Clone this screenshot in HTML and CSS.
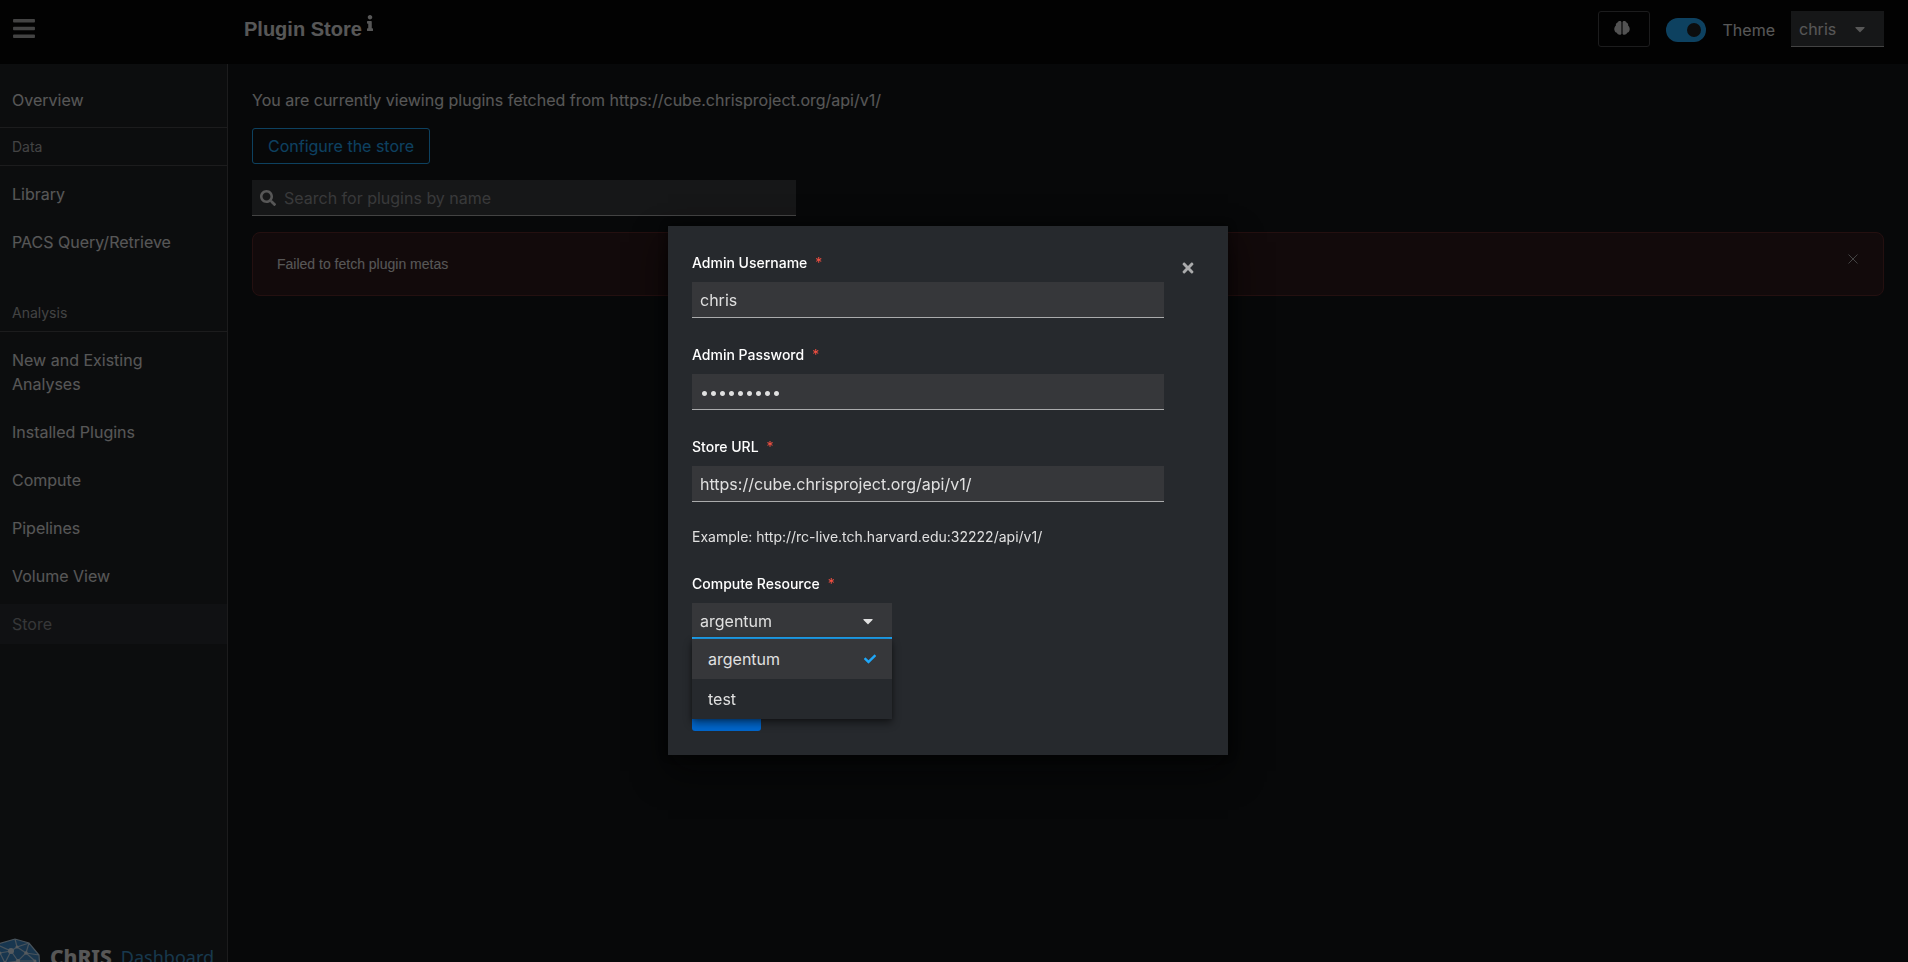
FILE: index.html
```html
<!DOCTYPE html>
<html lang="en">
<head>
<meta charset="utf-8">
<title>Plugin Store</title>
<link rel="stylesheet" href="styles.css">
</head>
<body>
<div class="page">
  <header class="masthead">
    <div class="masthead-start">
      <button class="plain menu-toggle" type="button" aria-label="Global navigation">
        <svg class="icon-bars" viewBox="0 0 448 512" fill="currentColor"><path d="M16 132h416c8.837 0 16-7.163 16-16V76c0-8.837-7.163-16-16-16H16C7.163 60 0 67.163 0 76v40c0 8.837 7.163 16 16 16zm0 160h416c8.837 0 16-7.163 16-16v-40c0-8.837-7.163-16-16-16H16c-8.837 0-16 7.163-16 16v40c0 8.837 7.163 16 16 16zm0 160h416c8.837 0 16-7.163 16-16v-40c0-8.837-7.163-16-16-16H16c-8.837 0-16 7.163-16 16v40c0 8.837 7.163 16 16 16z"/></svg>
      </button>
    </div>
    <h1 class="title">Plugin Store
      <svg class="icon-info" viewBox="0 0 192 512" fill="currentColor"><path d="M20 424.229h20V279.771H20c-11.046 0-20-8.954-20-20V212c0-11.046 8.954-20 20-20h112c11.046 0 20 8.954 20 20v212.229h20c11.046 0 20 8.954 20 20V492c0 11.046-8.954 20-20 20H20c-11.046 0-20-8.954-20-20v-47.771c0-11.046 8.954-20 20-20zM96 0C56.235 0 24 32.235 24 72s32.235 72 72 72 72-32.235 72-72S135.764 0 96 0z"/></svg>
    </h1>
    <div class="tools">
      <button class="brain-button" type="button" aria-label="Analyses drawer">
        <svg class="icon-brain" viewBox="0 0 16 16">
          <path fill="#d2d2d2" d="M7.200 1.400C6 .5 4 .9 3.600 2.400 2.200 2.800 1.600 4.300 1.900 5.400.5 6.400 0 8.600.4 10 .6 11.600 1.800 12.600 2.800 12.800 3.400 14.600 6 15.400 7.200 14.200z"/>
          <path fill="#d2d2d2" d="M8.800 1.400C10 .5 12 .9 12.400 2.400 13.800 2.800 14.400 4.300 14.100 5.400 15.500 6.400 16 8.600 15.600 10 15.400 11.600 14.200 12.600 13.200 12.800 12.600 14.600 10 15.400 8.800 14.200z"/>
          <path fill="#666" d="M7.200 2h1.600v12H7.200z"/>
        </svg>
      </button>
      <label class="theme"><input class="switch" type="checkbox" role="switch" checked>Theme</label>
      <div class="select user-select">
        <select aria-label="User menu"><option>chris</option></select>
        <svg class="icon-caret" viewBox="0 0 320 512" fill="currentColor"><path d="M31.300 192h257.300c17.800 0 26.700 21.500 14.100 34.100L174.100 354.800c-7.800 7.800-20.500 7.800-28.300 0L17.200 226.100C4.600 213.500 13.500 192 31.300 192z"/></svg>
      </div>
    </div>
  </header>

  <nav class="sidebar" aria-label="Global">
    <a class="nav-link" href="#">Overview</a>
    <h2 class="nav-title nav-title-ruled">Data</h2>
    <a class="nav-link" href="#">Library</a>
    <a class="nav-link" href="#">PACS Query/Retrieve</a>
    <h2 class="nav-title">Analysis</h2>
    <a class="nav-link" href="#">New and Existing Analyses</a>
    <a class="nav-link" href="#">Installed Plugins</a>
    <a class="nav-link" href="#">Compute</a>
    <a class="nav-link" href="#">Pipelines</a>
    <a class="nav-link" href="#">Volume View</a>
    <a class="nav-link current" href="#" aria-current="page">Store</a>
    <div class="brand">
      <svg class="globe" viewBox="0 0 52 52">
        <defs><linearGradient id="g" x1="0" y1="0" x2="1" y2="1"><stop offset="0" stop-color="#3488cf"/><stop offset="1" stop-color="#4a8cc0"/></linearGradient></defs>
        <path fill="url(#g)" d="M27 1 41 5 51 17 52 32 44 45 29 51 13 48 2 37 0 22 10 6z"/>
        <g stroke="#b8d4ea" stroke-width="1.200" fill="none">
          <path d="M10 6 27 1 41 5 51 17 52 32M12 8 23 13 29 9 41 5M29 9 27 1M29 9 38 15 51 17M23 13 12 15 2 19M23 13 17 25 30 23 38 15 41 5M23 13 30 23M38 15 47 23 52 32M30 23 47 23M12 15 17 25"/>
        </g>
        <g fill="#dceaf5"><circle cx="23" cy="13" r="3"/><circle cx="29" cy="9" r="1.500"/><circle cx="38" cy="15" r="1.800"/><circle cx="12" cy="15" r="1.500"/><circle cx="17" cy="25" r="1.800"/><circle cx="30" cy="23" r="2"/><circle cx="47" cy="23" r="1.500"/></g>
      </svg>
      <span class="brand-name">ChRIS</span>
      <span class="brand-sub">Dashboard</span>
    </div>
  </nav>

  <main class="main">
    <p class="source">You are currently viewing plugins fetched from https://cube.chrisproject.org/api/v1/</p>
    <button class="outline-button" type="button">Configure the store</button>
    <div class="search">
      <svg class="icon-search" viewBox="0 0 512 512" fill="currentColor"><path d="M505 442.700L405.300 343c-4.500-4.500-10.600-7-17-7H372c27.600-35.300 44-79.700 44-128C416 93.100 322.900 0 208 0S0 93.100 0 208s93.100 208 208 208c48.300 0 92.700-16.400 128-44v16.300c0 6.400 2.500 12.500 7 17l99.700 99.700c9.400 9.400 24.600 9.400 33.900 0l28.300-28.300c9.400-9.400 9.400-24.600.1-34zM208 336c-70.700 0-128-57.200-128-128 0-70.700 57.200-128 128-128 70.700 0 128 57.200 128 128 0 70.700-57.200 128-128 128z"/></svg>
      <input type="text" placeholder="Search for plugins by name" aria-label="Search for plugins by name">
    </div>
    <div class="alert" role="alert">
      <span class="alert-text">Failed to fetch plugin metas</span>
      <button class="plain alert-close" type="button" aria-label="Dismiss">
        <svg class="icon-thin-x" viewBox="0 0 12 12" fill="none" stroke="currentColor"><path d="M1.500 1.500 10.500 10.500M10.500 1.500 1.500 10.500"/></svg>
      </button>
    </div>
  </main>
</div>

<div class="backdrop">
  <div class="modal" role="dialog" aria-modal="true" aria-label="Configure the store">
    <form class="form">
      <div class="group">
        <label for="user">Admin Username<span class="star">*</span></label>
        <input class="field" id="user" type="text" value="chris">
      </div>
      <div class="group">
        <label for="pass">Admin Password<span class="star">*</span></label>
        <input class="field" id="pass" type="password" value="chris1234">
      </div>
      <div class="group">
        <label for="url">Store URL<span class="star">*</span></label>
        <input class="field" id="url" type="text" value="https://cube.chrisproject.org/api/v1/">
      </div>
      <p class="hint">Example: http://rc-live.tch.harvard.edu:32222/api/v1/</p>
      <div class="group">
        <label for="compute">Compute Resource<span class="star">*</span></label>
        <div class="select compute-select">
          <select id="compute"><option>argentum</option><option>test</option></select>
          <svg class="icon-caret" viewBox="0 0 320 512" fill="currentColor"><path d="M31.300 192h257.300c17.800 0 26.700 21.500 14.100 34.100L174.100 354.800c-7.800 7.800-20.500 7.800-28.300 0L17.200 226.100C4.600 213.500 13.500 192 31.300 192z"/></svg>
          <ul class="menu" role="listbox" aria-label="Compute Resource">
            <li class="menu-item selected" role="option" aria-selected="true">argentum
              <svg class="icon-check" viewBox="0 0 512 512" fill="currentColor"><path d="M173.898 439.404l-166.400-166.400c-9.997-9.997-9.997-26.206 0-36.204l36.203-36.204c9.997-9.998 26.207-9.998 36.204 0L192 312.690 432.095 72.596c9.997-9.997 26.207-9.997 36.204 0l36.203 36.204c9.997 9.997 9.997 26.206 0 36.204l-294.400 294.401c-9.998 9.997-26.207 9.997-36.204-.001z"/></svg>
            </li>
            <li class="menu-item" role="option" aria-selected="false">test</li>
          </ul>
        </div>
      </div>
      <button class="primary" type="button" aria-label="Save"></button>
    </form>
    <button class="plain modal-close" type="button" aria-label="Close">
      <svg class="icon-x" viewBox="0 0 352 512" fill="currentColor"><path d="M242.720 256l100.070-100.070c12.280-12.280 12.280-32.190 0-44.480l-22.240-22.240c-12.280-12.280-32.190-12.280-44.480 0L176 189.280 75.930 89.210c-12.280-12.280-32.190-12.280-44.480 0L9.210 111.450c-12.280 12.280-12.280 32.190 0 44.480L109.280 256 9.210 356.070c-12.280 12.280-12.280 32.190 0 44.480l22.240 22.240c12.280 12.280 32.200 12.280 44.480 0L176 322.720l100.070 100.070c12.280 12.280 32.200 12.280 44.480 0l22.240-22.240c12.280-12.280 12.280-32.190 0-44.480L242.720 256z"/></svg>
    </button>
  </div>
</div>
</body>
</html>
```

FILE: styles.css
```css
* {
  box-sizing: border-box;
}

body {
  margin: 0;
  background: #0f1214;
  color: #e0e0e0;
  font: 16px/24px Inter, "Liberation Sans", sans-serif;
}

h1, h2, p, ul {
  margin: 0;
  padding: 0;
  font-weight: 400;
}

button, input, select {
  margin: 0;
  font: inherit;
  color: inherit;
}

svg {
  display: block;
  flex: none;
}

.page {
  display: grid;
  grid-template: 64px 1fr / 228px 1fr;
  height: 100vh;
  overflow: hidden;
}

.plain {
  display: flex;
  padding: 0;
  border: 0;
  background: none;
}

/* Header */
.masthead {
  grid-column: 1 / -1;
  display: flex;
  align-items: flex-start;
  padding: 11px 24px 0 0;
  background: #000;
}

.masthead-start {
  flex: none;
  width: 244px;
  padding-left: 13px;
}

.menu-toggle {
  padding-top: 5px;
  color: #aaabac;
}

.icon-bars {
  width: 22px;
  height: 25px;
}

.title {
  display: flex;
  gap: 5px;
  font: 700 20px/36px "Liberation Sans", Arial, sans-serif;
}

.icon-info {
  width: 6px;
  height: 16px;
  margin-top: 4px;
}

.tools {
  display: flex;
  align-items: center;
  gap: 16px;
  margin-left: auto;
}

.brain-button {
  width: 52px;
  height: 36px;
  padding: 0 15px 2px;
  border: 1px solid #444548;
  border-radius: 3px;
  background: none;
}

.icon-brain {
  width: 16px;
  height: 16px;
}

.theme {
  display: flex;
  align-items: center;
  gap: 17px;
  padding-top: 1px;
}

.switch {
  appearance: none;
  display: flex;
  align-items: center;
  justify-content: flex-end;
  width: 40px;
  height: 24px;
  padding-right: 5px;
  border-radius: 12px;
  background: #1fa7f8;
}

.switch::before {
  content: "";
  width: 14px;
  height: 14px;
  border-radius: 50%;
  background: #1b1d21;
}

.select {
  position: relative;
  height: 36px;
}

.select select {
  appearance: none;
  display: block;
  width: 100%;
  height: 36px;
  padding: 1px 8px 0;
  border: 0;
  border-bottom: 1px solid #aaabac;
  border-radius: 0;
  outline: 0;
  background: #36373a;
}

.icon-caret {
  position: absolute;
  top: 10px;
  right: 19px;
  width: 10px;
  height: 16px;
}

.user-select {
  width: 93px;
}

/* Sidebar */
.sidebar {
  position: relative;
  display: flex;
  flex-direction: column;
  gap: 8px;
  padding-top: 16px;
  border-right: 1px solid #444548;
  background: #1b1d21;
  overflow: hidden;
}

.nav-link {
  padding: 8px 48px 8px 12px;
  color: #e0e0e0;
  text-decoration: none;
}

.nav-link.current {
  background: #26292d;
  color: #8a8d90;
}

.nav-title {
  margin-top: 24px;
  padding: 8px 12px;
  border-bottom: 1px solid #444548;
  color: #aaabac;
  font-size: 14px;
  line-height: 21px;
}

.nav-title-ruled {
  margin-top: -1px;
  border-top: 1px solid #444548;
}

.brand {
  position: absolute;
  top: 874px;
  left: -12px;
  display: flex;
  white-space: nowrap;
}

.globe {
  width: 52px;
  height: 52px;
}

.brand-name {
  margin: 5px 9px 0 10px;
  color: #e0e0e0;
  font: 800 21px/28px "Noto Sans", sans-serif;
}

.brand-sub {
  margin-top: 5px;
  color: #3a8fc4;
  font: 400 18px/28px "Noto Sans", sans-serif;
}

/* Content */
.main {
  display: flex;
  flex-direction: column;
  align-items: flex-start;
  gap: 16px;
  padding: 24px;
}

.outline-button {
  height: 36px;
  padding: 0 15px;
  border: 1px solid #1fa7f8;
  border-radius: 3px;
  background: none;
  color: #1fa7f8;
}

.search {
  display: flex;
  align-items: center;
  gap: 8px;
  width: 33.333%;
  height: 36px;
  padding: 0 8px;
  border-bottom: 1px solid #aaabac;
  background: #36373a;
}

.search input {
  flex: 1;
  min-width: 0;
  padding: 0;
  border: 0;
  outline: 0;
  background: none;
}

.search input::placeholder {
  color: #8f9194;
  opacity: 1;
}

.icon-search {
  width: 16px;
  height: 16px;
}

.alert {
  display: flex;
  justify-content: space-between;
  width: 100%;
  padding: 20px 24px;
  border: 1px solid #5b2526;
  border-radius: 8px;
  background: #2c1618;
  font: 14px/22px "Liberation Sans", Arial, sans-serif;
}

.alert-close {
  color: #aaabac;
}

.icon-thin-x {
  width: 12px;
  height: 12px;
}

/* Dialog */
.backdrop {
  position: fixed;
  inset: 0;
  display: flex;
  align-items: center;
  justify-content: center;
  padding: 19px 12px 0 0;
  background: rgba(3, 3, 3, 0.62);
}

.modal {
  display: flex;
  align-items: flex-start;
  width: 560px;
  padding: 24px;
  background: #26292d;
  box-shadow: 0 16px 32px rgba(3, 3, 3, 0.64), 0 0 8px rgba(3, 3, 3, 0.4);
}

.form {
  flex: 1;
  display: flex;
  flex-direction: column;
  gap: 24px;
}

.group {
  display: flex;
  flex-direction: column;
  gap: 6px;
}

.group label {
  color: #fff;
  font-size: 14px;
  font-weight: 500;
  line-height: 26px;
}

.star {
  margin-left: 8px;
  color: #fe5142;
  font-weight: 400;
}

.field {
  height: 36px;
  padding: 0 8px;
  border: 0;
  border-bottom: 1px solid #aaabac;
  outline: 0;
  background: #36373a;
}

.hint {
  font-size: 14px;
  line-height: 21px;
}

.compute-select {
  width: 200px;
}

.compute-select select {
  padding-top: 2px;
  border-bottom: 2px solid #1fa7f8;
}

.menu {
  position: absolute;
  top: 36px;
  left: 0;
  width: 100%;
  list-style: none;
  background: #26292d;
  box-shadow: 0 4px 8px rgba(3, 3, 3, 0.48), 0 0 4px rgba(3, 3, 3, 0.24);
}

.menu-item {
  display: flex;
  align-items: center;
  justify-content: space-between;
  padding: 8px 16px;
}

.menu-item.selected {
  background: #36373a;
}

.icon-check {
  width: 12px;
  height: 12px;
  color: #1fa7f8;
}

.primary {
  align-self: flex-start;
  width: 69px;
  height: 36px;
  margin-top: 32px;
  border: 0;
  border-radius: 3px;
  background: #06c;
}

.modal-close {
  width: 40px;
  padding-top: 10px;
  justify-content: flex-end;
  color: #aaabac;
}

.icon-x {
  width: 12px;
  height: 16px;
  margin-right: 10px;
}
```
